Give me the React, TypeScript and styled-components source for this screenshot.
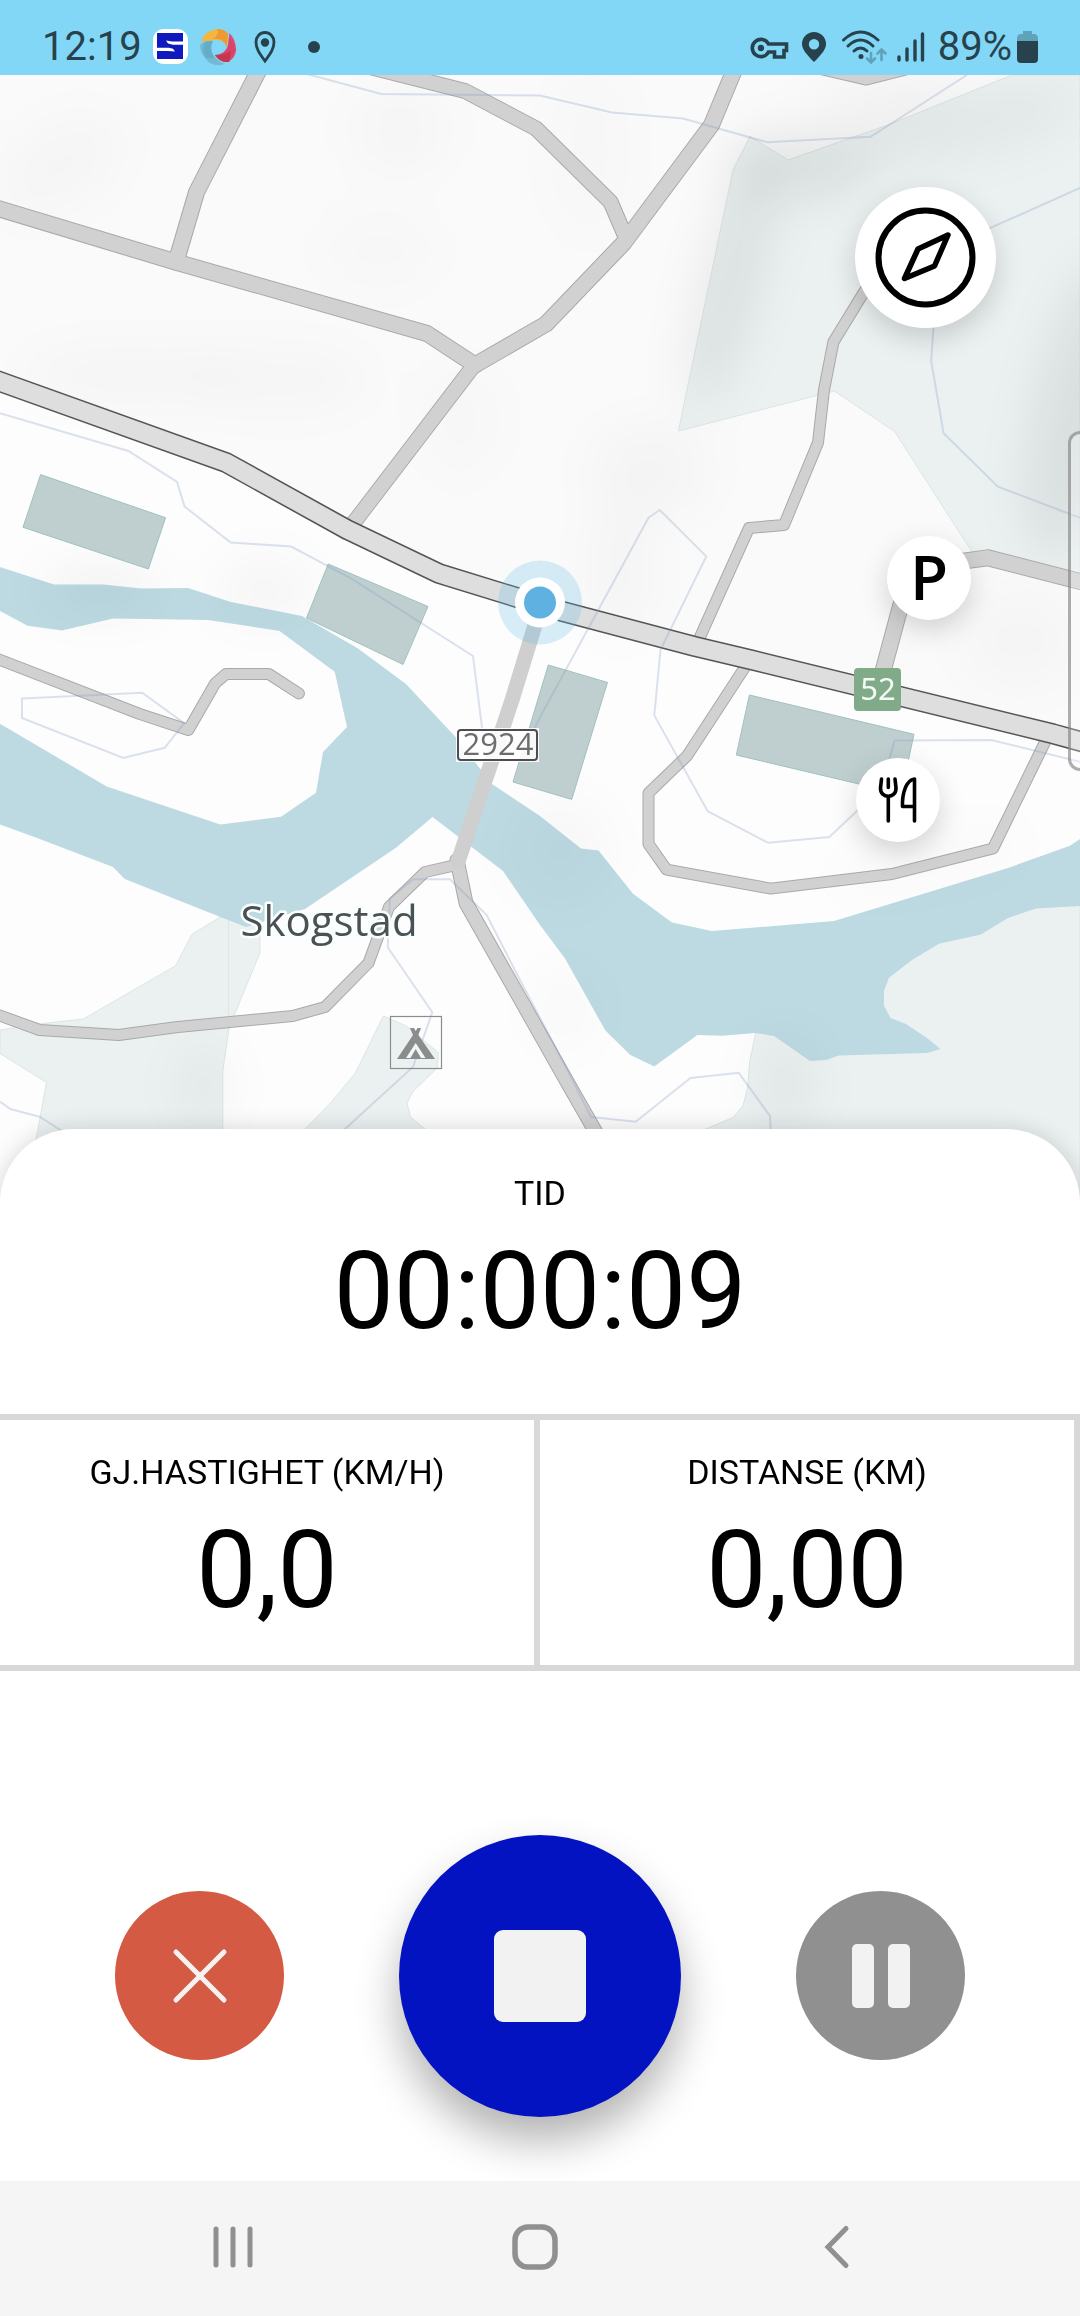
import React from "react";
import styled, { createGlobalStyle, css } from "styled-components";

const GlobalStyle = createGlobalStyle`
  *, *::before, *::after { box-sizing: border-box; }
  body { margin: 0; background: #ffffff; font-family: Roboto, "Noto Sans", sans-serif; color: #000000; }
  button { border: 0; padding: 0; margin: 0; font: inherit; color: inherit; cursor: pointer; }
  svg { display: block; }
`;

const Screen = styled.div`
  display: flex;
  flex-direction: column;
  min-height: 100vh;
`;

const StatusBar = styled.header`
  display: flex;
  align-items: center;
  justify-content: space-between;
  height: 75px;
  padding: 18px 42px 0;
  background: #82d7f7;
  color: #27424d;
  font-size: 40px;
  line-height: 48px;
`;

const StatusGroup = styled.div<{ $gap: number }>`
  display: flex;
  align-items: center;
  gap: ${(p) => p.$gap}px;
`;

const MapArea = styled.main`
  position: relative;
  overflow: hidden;
  background: #fafafa;
`;

const MapDrawing = styled.svg`
  width: 100%;
  height: auto;
`;

const MapButton = styled.button<{ $size: number; $top: number; $right: number }>`
  position: absolute;
  top: ${(p) => p.$top}px;
  right: ${(p) => p.$right}px;
  display: flex;
  align-items: center;
  justify-content: center;
  width: ${(p) => p.$size}px;
  height: ${(p) => p.$size}px;
  border-radius: 50%;
  background: #ffffff;
  box-shadow: 0 10px 28px rgba(0, 0, 0, 0.17);
`;

const PinLetter = styled.span`
  padding-bottom: 4px;
  font-family: "Open Sans", "Noto Sans", sans-serif;
  font-weight: 600;
  font-size: 62px;
  line-height: 80px;
`;

const EdgeHandle = styled.div`
  position: absolute;
  top: 356px;
  right: -14px;
  width: 26px;
  height: 340px;
  border: 3px solid rgba(120, 120, 120, 0.6);
  border-radius: 12px;
  background: rgba(255, 255, 255, 0.25);
`;

const Sheet = styled.section`
  position: relative;
  display: flex;
  flex-direction: column;
  flex: 1;
  margin-top: -74px;
  border-radius: 74px 74px 0 0;
  background: #ffffff;
  box-shadow: 0 0 22px rgba(0, 0, 0, 0.16);
`;

const Stat = styled.div<{ $main?: boolean }>`
  display: flex;
  flex-direction: column;
  align-items: center;
  gap: 17px;
  ${(p) =>
    p.$main
      ? css`
          padding: 44px 0 60px;
        `
      : css`
          flex: 1;
          padding: 32px 0;
          border-right: 6px solid #d8d8d8;
        `}
`;

const StatLabel = styled.span`
  font-size: 34px;
  line-height: 40px;
  text-transform: uppercase;
`;

const StatValue = styled.span`
  font-size: 107px;
  line-height: 124px;
`;

const StatRow = styled.div`
  display: flex;
  border-top: 6px solid #d8d8d8;
  border-bottom: 6px solid #d8d8d8;
`;

const Controls = styled.div`
  display: flex;
  flex: 1;
  align-items: center;
  justify-content: space-evenly;
  padding: 163px 0 64px;
`;

const RoundButton = styled.button<{ $color: string; $large?: boolean }>`
  display: flex;
  align-items: center;
  justify-content: center;
  width: ${(p) => (p.$large ? 282 : 169)}px;
  height: ${(p) => (p.$large ? 282 : 169)}px;
  border-radius: 50%;
  background: ${(p) => p.$color};
  box-shadow: ${(p) => (p.$large ? "0 24px 44px rgba(0, 0, 0, 0.3)" : "none")};
`;

const NavBar = styled.nav`
  position: relative;
  display: grid;
  grid-template-columns: repeat(3, 1fr);
  height: 135px;
  padding: 0 92px 4px 82px;
  background: #f5f5f5;
`;

const NavButton = styled.button`
  display: flex;
  align-items: center;
  justify-content: center;
  background: transparent;
`;

type Road = { d: string; w: number };

const ROADS: Road[] = [
  { d: "M260 68 L196.6 192 L176 262", w: 17 },
  { d: "M-10 206 L174 261.5 L427 333.5 L475 365", w: 17 },
  { d: "M475 364 L355 521 L346 532", w: 16 },
  { d: "M475 365 L546 324 L623.7 243 L711.5 125 L736 66", w: 17 },
  { d: "M370 67 L465 91 L536 128.5 L610.6 202 L626 238", w: 16 },
  { d: "M806 63 L866 77 L925 62", w: 17 },
  { d: "M885 262 L864 292 L833.4 342 L824 390 L818 442.6 L784 525 L749 528 L700 637", w: 12 },
  { d: "M747 664 L687 756 L648.5 793 L648.5 844 L666.7 869.7 L770.7 888.6 L892 874 L993 848.5 L1047 738", w: 12 },
  { d: "M883 671 L900 608 L912 568 L967 560.6 L987.7 557.8 L1090 584", w: 17 },
  { d: "M457 860 L466 903 L570 1087 L614 1164", w: 15 },
  { d: "M458 864.7 L425 872 L389 907 L368.5 962.9 L325 1007 L292.7 1016 L175.6 1027.3 L118.8 1035 L39.6 1030 L-10 1012", w: 12 },
  { d: "M-10 656 L139.5 713.9 L188.4 730 L215.2 683.3 L226.2 673.9 L268.6 673.9 L298.9 693.5", w: 12 },
];

const MAIN_ROAD =
  "M-10 378 L226.2 462.6 L347 529.5 L439 573.5 L560.7 611 L695 646.5 L752 660 L1053 733.8 L1090 744";

const WATER =
  "M0 567L54 584.5L103 584.5L141 588.6L188 588L231 602L302 616L358 648.6L406 684L456 737.6L492 784L540 816L581 848.5L598.5 850.4L633 893.8L672 922.6L712 931L834 921L1008 868L1070 845.7L1080 839L1080 906L1036 908.4L1008 918L981 934.4L939 943.8L912 960L889 977.8L884 991L884 1005.6L890.5 1018L906 1024L927 1038L940.5 1049L927 1053L839 1055.6L826 1060L810 1061L774 1036L755.6 1033L722.5 1035.8L697.4 1035L654.3 1066.5L630 1054.7L605.4 1030.6L565 958.4L540 925L503 871L432.5 817L396 847.8L305 909L246 927L220.4 917L124.7 879L113 867L34.4 837L0 824.5L0 723.7L106.7 786.5L220.4 824.5L281 816.7L316 792.7L323 752L347 727L334.7 671.8L279.6 631L208 620L113 618.4L62 630.6L27.5 625.7L0 611Z";

const FORESTS = [
  "M1012 75L889.5 124.4L788 160L750 136.5L733 170L678.4 431L834.4 391L894.7 431.6L972 552L988 558L1080 581V75Z",
  "M755.6 1033L749.7 1062L747.6 1088L743 1105.7L733 1117.5L703.6 1130L640 1203H1080V900L1030 905L880 960L860 1030Z",
  "M220.4 917L192 934.3L175.6 965.7L83.3 1019L41.3 1023.7L0 1030V1053.5L46.5 1082.4L36 1140L30 1203H222.8V1071L228.7 1030L234 1016L260 952.7V925Z",
  "M383.3 1016L406.3 1026L438.4 1052.7L437.3 1068L413 1091.4L407 1103L410.5 1117L425.3 1129.4L430 1160H280L304.8 1129.4L330.6 1103L355.4 1073Z",
];

const BUILDINGS = [
  "M40.6 474.6L165.6 517.7L148.4 569L23 527.3Z",
  "M328.2 564L428 606.5L403 664.5L306.5 618Z",
  "M548.3 665L607.5 682.4L571.7 799.4L513 782Z",
  "M749.4 695L914 734.3L901 794L736.3 755Z",
];

const CONTOURS = [
  "M306.5 74L381.5 94L540 95.5L612 112.4L683 118.6L767.3 142.3L870.6 136.8L967 75",
  "M0 413.3L128.4 451L177 482L184.6 506.6L230.7 542.5L291.3 546.6L351 578.4L473 656L484 743.7L528.6 740.4L540 717.3L648.5 517.7L659.8 510L706.3 556.4L660.5 649.8L654.3 715.4L707.7 811.2L768 842.8L829.3 837L857 811L888 764L894.7 740.4L991 740L1080 761.7",
  "M1080 188L991 227.7L938 260L931.2 361L943.6 433.3L998 486.7L1080 517.7",
  "M22 698.4L142.2 692.7L184.2 723.3L164.6 747.8L123.3 758L22 718Z",
  "M344.4 1129.4L413 1067L432.3 1012.3L387.7 947.3L390 898.3L413.3 879.3H450L486.7 915L518.3 976.7L570 1075L591 1117L635.7 1121.7L690.5 1078L738.7 1072.7L770 1116L771 1140",
  "M0 1101.6L10.3 1109L39.6 1116.7L62 1131",
];

/* cx, cy, rx, ry, rotation, opacity */
const SHADES: number[][] = [
  [730, 280, 26, 130, 14, 0.075],
  [800, 165, 70, 34, 0, 0.075],
  [960, 125, 130, 34, -12, 0.035],
  [1080, 410, 44, 150, 12, 0.075],
  [650, 470, 60, 46, 0, 0.022],
  [130, 375, 110, 24, 0, 0.025],
  [60, 165, 70, 40, -30, 0.018],
  [400, 130, 50, 40, 0, 0.018],
  [380, 250, 60, 40, 0, 0.012],
  [280, 380, 90, 30, 0, 0.018],
  [460, 420, 40, 60, 0, 0.012],
  [590, 150, 40, 90, 0, 0.012],
  [880, 100, 70, 30, 0, 0.025],
  [100, 590, 60, 20, 0, 0.05],
  [265, 590, 50, 30, 0, 0.03],
  [620, 570, 30, 70, 0, 0.022],
  [560, 850, 50, 50, 0, 0.022],
  [204, 1085, 24, 40, 0, 0.04],
  [785, 1085, 30, 50, 0, 0.04],
  [1020, 640, 60, 50, 0, 0.02],
  [565, 1010, 30, 40, 0, 0.02],
  [930, 860, 100, 20, -12, 0.02],
];

function TopoMap() {
  return (
    <MapDrawing viewBox="0 75 1080 1128" role="img" aria-label="Kart over Skogstad">
      <defs>
        <filter id="shade" x="-100%" y="-100%" width="300%" height="300%">
          <feGaussianBlur stdDeviation="24" />
        </filter>
      </defs>
      <rect x="0" y="75" width="1080" height="1128" fill="#fafafa" />
      <path d="M0 381L226 462L347 529L439 573L560 611L1080 742V1203H0Z" fill="#fdfdfd" />
      {FORESTS.map((d) => (
        <path key={d} d={d} fill="#ebf1f1" stroke="#dbe6e5" strokeWidth="1" />
      ))}
      <path d="M228.6 920V1030" stroke="#dbe6e5" strokeWidth="1" />
      <path d={WATER} fill="#bddae3" />
      <g filter="url(#shade)">
        {SHADES.map(([cx, cy, rx, ry, rot, o], i) => (
          <ellipse key={i} cx={cx} cy={cy} rx={rx} ry={ry} opacity={o} transform={`rotate(${rot} ${cx} ${cy})`} />
        ))}
      </g>
      <g fill="none" strokeLinejoin="round" strokeLinecap="round">
        {ROADS.map((r) => (
          <path key={r.d} d={r.d} stroke="#a9a9a9" strokeWidth={r.w} />
        ))}
        {ROADS.map((r) => (
          <path key={r.d} d={r.d} stroke="#d1d1d1" strokeWidth={r.w - 2} />
        ))}
        <path d="M539 612L512 700L458 862" stroke="#cfcfcf" strokeWidth="15" />
        <path d={MAIN_ROAD} stroke="#555555" strokeWidth="21" />
        <path d={MAIN_ROAD} stroke="#dedede" strokeWidth="18" />
      </g>
      {BUILDINGS.map((d) => (
        <path key={d} d={d} fill="#bfcfcf" stroke="#9fc0bf" strokeWidth="1" />
      ))}
      {CONTOURS.map((d) => (
        <path key={d} d={d} fill="none" stroke="#829bc3" strokeOpacity="0.28" strokeWidth="2" />
      ))}

      <rect x="456" y="728" width="83" height="34" fill="#ffffff" fillOpacity="0.88" />
      <rect x="458" y="730" width="79" height="30" rx="3" fill="none" stroke="#4d4d4f" strokeWidth="2" />
      <text x="498" y="755" textAnchor="middle" fontFamily="'Open Sans', 'Noto Sans', sans-serif" fontSize="31" fill="#6d6d6d">
        2924
      </text>
      <rect x="854" y="668" width="47" height="43" rx="4" fill="#81aa89" />
      <text x="878" y="700" textAnchor="middle" fontFamily="'Noto Sans', sans-serif" fontSize="31" fill="#f4faf5">
        52
      </text>
      <text
        x="329"
        y="936"
        textAnchor="middle"
        fontFamily="'Open Sans', 'Noto Sans', sans-serif"
        fontSize="42"
        fill="#4d5052"
        stroke="#f7ffff"
        strokeWidth="5"
        strokeLinejoin="round"
        paintOrder="stroke"
      >
        Skogstad
      </text>

      <rect x="390.5" y="1016.5" width="51" height="52" fill="none" stroke="#8b8d8d" strokeWidth="1.2" />
      <path d="M397 1059L413 1035L410 1028H414L415.7 1031L417.5 1028H421L418.4 1035L435 1059Z" fill="#8b8d8d" />
      <path d="M406 1058L415.7 1043L425.5 1058Z" fill="#f3f6f6" />
      <path d="M410.5 1058L415.7 1049L421 1058Z" fill="#8b8d8d" />

      <circle cx="540" cy="602.5" r="42" fill="#5cb8e0" fillOpacity="0.24" />
      <circle cx="540" cy="602.5" r="25" fill="#ffffff" />
      <circle cx="540" cy="602.5" r="16" fill="#5eb1e0" />
    </MapDrawing>
  );
}

export default function App() {
  return (
    <Screen>
      <GlobalStyle />
      <StatusBar>
        <StatusGroup $gap={11}>
          <span>12:19</span>
          <svg width="36" height="36" viewBox="0 0 36 36" aria-hidden="true">
            <rect width="35" height="35" rx="11" fill="#ffffff" />
            <rect x="4" y="4" width="26" height="26" fill="#1019bd" />
            <path d="M30 12.5H19L13 11.5L15 14.5L20 15.8H30Z" fill="#ffffff" />
            <path d="M4 18.8H16L20 19.8L22 22.5L15 22H4Z" fill="#ffffff" />
          </svg>
          <svg width="36" height="36" viewBox="0 0 36 36" aria-hidden="true">
            <path d="M1 12Q6 1 17 0Q25 0 28 5L27 18Q21 8 11 12Q5 13 1 12Z" fill="#f4b63c" />
            <path d="M17 0Q25 0 28 5L27 18Q23 8 13 10Q20 5 17 0Z" fill="#ed9a36" />
            <path d="M29.5 4Q36 11 36 21Q35 29 29 32.5Q27 20 29.5 4Z" fill="#e04a70" />
            <path d="M29 9Q29 25 15 26Q20 34 29 33L36 21Q34 14 29 9Z" fill="#da4269" />
            <path d="M15 26Q24 27 31 22L29 33Q20 34 15 26Z" fill="#c7354f" />
            <path d="M0 16Q5 11 13 12Q9 21 15 28Q19 33 25 35Q12 39 5 29Q0 23 0 16Z" fill="#73b9d2" />
            <path d="M5 13Q10 12 13 12Q8 19 14 29L6 29Q1 20 5 13Z" fill="#5aa5c0" opacity="0.6" />
          </svg>
          <svg width="36" height="36" viewBox="0 0 36 36" fill="none" aria-hidden="true">
            <path d="M18 32C13 25 9 20 9 13A9 9.5 0 0 1 27 13C27 20 23 25 18 32Z" stroke="#27424d" strokeWidth="2.8" />
            <circle cx="18" cy="13.5" r="4.2" fill="#27424d" />
          </svg>
          <svg width="36" height="36" viewBox="0 0 36 36" aria-hidden="true">
            <circle cx="20" cy="18" r="6" fill="#27424d" />
          </svg>
        </StatusGroup>
        <StatusGroup $gap={5}>
          <svg width="41" height="36" viewBox="0 0 41 36" fill="none" aria-hidden="true">
            <path
              d="M18.5 15H36.5V21.5H34V28H24.5V23H18.5A8.6 8.6 0 1 1 18.5 15Z"
              stroke="#27424d"
              strokeWidth="3.6"
            />
            <circle cx="11" cy="19" r="3.2" fill="#27424d" />
          </svg>
          <svg width="40" height="36" viewBox="0 0 40 36" aria-hidden="true">
            <path
              fillRule="evenodd"
              d="M18 33C10 25 6 20 6 15A12 12 0 0 1 30 15C30 20 26 25 18 33ZM18 10A5.2 5.2 0 1 0 18 20.4A5.2 5.2 0 1 0 18 10Z"
              fill="#27424d"
            />
          </svg>
          <svg width="51" height="36" viewBox="0 0 51 36" fill="none" strokeLinecap="round" aria-hidden="true">
            <g stroke="#27424d" strokeWidth="3">
              <path d="M2.5 11Q19.5 -5 37 11" />
              <path d="M7 17Q19.5 5 32 17" />
              <path d="M13 22Q19.5 16 26 22" />
            </g>
            <circle cx="20" cy="27.5" r="2.5" fill="#27424d" />
            <g stroke="#5fa3bb" strokeWidth="2.6">
              <path d="M30 24V33M26 29.5L30 33.5L34 29.5" />
              <path d="M40.5 31V21M36.5 24.5L40.5 20.5L44.5 24.5" />
            </g>
          </svg>
          <svg width="36" height="36" viewBox="0 0 36 36" stroke="#27424d" strokeWidth="3.4" strokeLinecap="round" aria-hidden="true">
            <path d="M2 28V31M10 20V31M18 12V31M25.5 5V31" />
          </svg>
          <span>89%</span>
          <svg width="21" height="36" viewBox="0 0 21 36" aria-hidden="true">
            <path d="M6 2H15V5H18Q21 6 21 9V13H0V9Q0 6 3 5H6Z" fill="#5fa3bb" />
            <path d="M0 12H21V30Q21 34 17 34H4Q0 34 0 30Z" fill="#27424d" />
          </svg>
        </StatusGroup>
      </StatusBar>

      <MapArea>
        <TopoMap />
        <EdgeHandle />
        <MapButton $size={141} $top={112} $right={84} aria-label="Kompass">
          <svg width="101" height="101" viewBox="-50.5 -50.5 101 101" fill="none" stroke="#000000" aria-hidden="true">
            <circle r="47" strokeWidth="6" />
            <path d="M22.5 -22.5L-7.5 -8.5L-21 21L9 8.5Z" strokeWidth="5.5" strokeLinejoin="round" />
          </svg>
        </MapButton>
        <MapButton $size={84} $top={461} $right={109} aria-label="Parkering">
          <PinLetter>P</PinLetter>
        </MapButton>
        <MapButton $size={84} $top={683} $right={140} aria-label="Servering">
          <svg width="60" height="60" viewBox="-30 -30 60 60" fill="none" stroke="#000000" strokeWidth="3.6" strokeLinecap="round" strokeLinejoin="round" aria-hidden="true">
            <path d="M-16.5 -21L-17.5 -12C-18 -1 -1.5 -1 -2 -12L-3 -21" />
            <path d="M-9.7 -21V-12.5M-9.7 -3V21" />
            <path d="M16.5 21V-21C8 -20 4 -6 4.5 6.5H16.5" />
          </svg>
        </MapButton>
      </MapArea>

      <Sheet>
        <Stat $main>
          <StatLabel>Tid</StatLabel>
          <StatValue>00:00:09</StatValue>
        </Stat>
        <StatRow>
          <Stat>
            <StatLabel>Gj.hastighet (km/h)</StatLabel>
            <StatValue>0,0</StatValue>
          </Stat>
          <Stat>
            <StatLabel>Distanse (km)</StatLabel>
            <StatValue>0,00</StatValue>
          </Stat>
        </StatRow>
        <Controls>
          <RoundButton $color="#d55a43" aria-label="Avbryt">
            <svg width="60" height="60" viewBox="-30 -30 60 60" stroke="#f2f2f2" strokeWidth="5" strokeLinecap="round" aria-hidden="true">
              <path d="M-24 -24L24 24M24 -24L-24 24" />
            </svg>
          </RoundButton>
          <RoundButton $color="#0413c2" $large aria-label="Stopp">
            <svg width="92" height="92" viewBox="0 0 92 92" aria-hidden="true">
              <rect width="92" height="92" rx="9" fill="#f2f2f2" />
            </svg>
          </RoundButton>
          <RoundButton $color="#909090" aria-label="Pause">
            <svg width="58" height="64" viewBox="0 0 58 64" fill="#f2f2f2" aria-hidden="true">
              <rect width="22" height="64" rx="5" />
              <rect x="36" width="22" height="64" rx="5" />
            </svg>
          </RoundButton>
        </Controls>
      </Sheet>

      <NavBar>
        <NavButton aria-label="Siste apper">
          <svg width="46" height="46" viewBox="0 0 46 46" stroke="#909090" strokeWidth="5" strokeLinecap="round" aria-hidden="true">
            <path d="M6 5V41M23 5V41M40 5V41" />
          </svg>
        </NavButton>
        <NavButton aria-label="Hjem">
          <svg width="46" height="46" viewBox="0 0 46 46" fill="none" stroke="#909090" strokeWidth="5.5" aria-hidden="true">
            <rect x="3" y="3" width="40" height="40" rx="13" />
          </svg>
        </NavButton>
        <NavButton aria-label="Tilbake">
          <svg width="46" height="46" viewBox="0 0 46 46" fill="none" stroke="#909090" strokeWidth="5" strokeLinecap="round" strokeLinejoin="miter" aria-hidden="true">
            <path d="M32 4.5L14 23L32 41.5" />
          </svg>
        </NavButton>
      </NavBar>
    </Screen>
  );
}
